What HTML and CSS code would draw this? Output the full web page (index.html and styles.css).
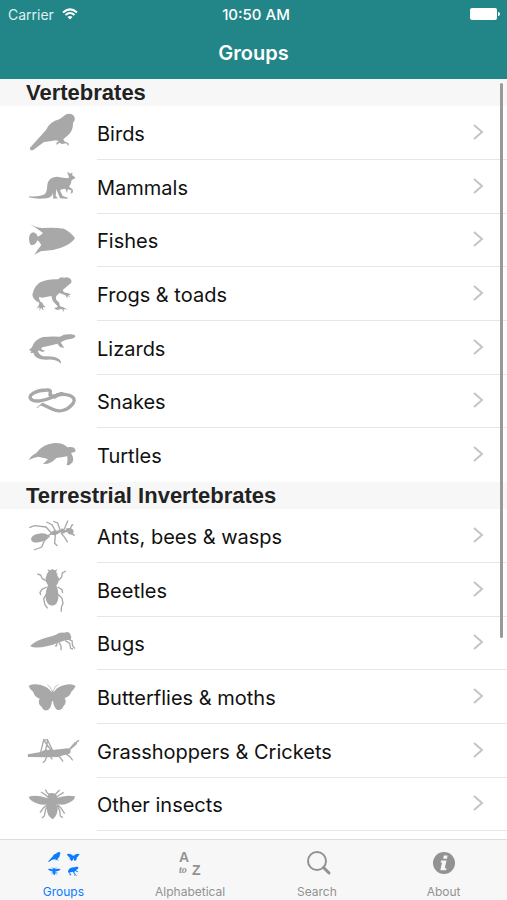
FILE: index.html
```html
<!DOCTYPE html>
<html lang="en">
<head>
<meta charset="utf-8">
<meta name="viewport" content="width=device-width, initial-scale=1">
<title>Groups</title>
<link rel="stylesheet" href="styles.css">
</head>
<body>
<svg class="defs" aria-hidden="true">
  <symbol id="bird" viewBox="18 3 162 156"><path d="M30 128Q52 104 78 75Q89 50 118 43Q131 34 136 29Q148 23 158 29Q166 35 164 46L159 54Q160 76 144 91L130 103L133 109L146 115L145 124L139 115L126 117L118 113L110 120L109 114L116 108L108 106Q88 110 72 111L40 135Q29 139 30 128Z"/></symbol>
  <symbol id="kangaroo" viewBox="18 165 162 156"><path d="M27 274Q62 276 75 267Q81 260 82 240Q85 216 110 215Q132 218 145 220Q149 216 145 210L141 202Q149 203 152 207Q153 201 158 204L156 210Q166 215 166 220L155 225Q154 237 147 245L158 253L159 262L152 267L154 256L143 253L141 265L136 251Q124 251 120 256L128 273L144 278L142 281L120 280L114 265L109 252L107 273L114 280L100 281L99 265Q94 278 80 280Q48 283 27 277Z"/></symbol>
  <symbol id="fish" viewBox="18 -3 162 156"><path d="M31 28Q46 38 65 39Q104 36 132 41Q156 54 165 70Q153 88 123 98Q94 109 64 108L43 119Q51 106 64 90Q57 78 52 76Q47 92 33 90Q27 85 27 69Q29 53 41 52Q50 55 54 65Q62 61 69 54Q54 43 31 28Z"/></symbol>
  <symbol id="frog" viewBox="18 156 162 156"><path d="M37 239Q43 212 61 202Q84 191 115 193Q121 184 132 188Q148 184 154 195L154 203L129 224Q128 232 139 233L154 238L145 241L153 248L142 242L143 251L136 241L118 234L109 243Q104 255 117 262L120 274L130 277L144 284L131 282L132 291L125 282L111 285L102 280L114 275L98 257L94 243L66 248L58 245Q55 257 67 263L70 270L78 277L69 276L71 287L63 278L59 287L58 276L49 281L57 270L58 263Q39 255 37 239Z"/></symbol>
  <symbol id="lizard" viewBox="18 -3 162 156"><path d="M27 84L36 76Q43 53 68 45Q98 42 120 44Q133 35 152 37Q167 37 166 45Q158 52 138 53L122 61L129 72L133 77L121 76L112 65Q94 70 67 76L63 81L75 87L68 90L54 85Q53 96 69 103Q102 101 113 109Q124 115 123 125Q108 110 78 113Q44 112 40 92L31 94L34 88Z"/></symbol>
  <symbol id="snake" viewBox="18 159 162 156"><path class="line" d="M93 226Q88 219 91 212Q94 203 79 204C50 205 26 216 31 229C40 244 76 235 99 225Q111 217 128 214"/><path class="line" d="M101 227Q116 213 139 218C162 222 169 233 156 248C143 264 119 272 98 262Q81 254 65 246"/><path d="M89 205Q91 221 108 216Q122 209 131 212L124 219Q104 219 96 230Q85 227 86 212ZM49 258L65 244L75 248L68 250Q59 250 52 259Z"/></symbol>
  <symbol id="turtle" viewBox="18 -6 162 156"><path d="M26 90Q33 77 49 69Q68 42 104 39Q128 38 143 52Q154 49 162 53Q168 57 166 65L153 69Q163 85 158 97Q151 106 140 106Q144 94 142 79Q122 82 109 84Q91 104 69 102Q78 93 84 87L55 80Q41 83 26 90Z"/></symbol>
  <symbol id="ant" viewBox="18 237 162 156"><path d="M33 329Q34 315 52 312Q73 307 84 315L93 308Q98 299 109 302L119 301L127 295L137 301L139 295L151 294L160 299Q163 306 158 314L147 313L140 305L129 311L122 307L106 316L94 314L84 319Q80 333 56 337Q38 340 33 329Z"/><path class="limb" d="M94 309L78 291L43 287L28 293M107 304L96 284L79 276M121 303L113 279L100 274M89 318L73 332L65 351L42 360M106 314L104 340L112 348M123 309L134 322L143 337M133 298L139 282L144 272M151 296L155 286L160 284M154 310L164 317"/></symbol>
  <symbol id="beetle" viewBox="18 9 162 156"><path d="M81 41L86 34L82 28L91 31L97 27L104 31L112 28L108 36L112 41L112 47L117 55Q117 69 109 76Q116 91 115 115Q112 136 97 137Q80 136 77 115Q76 92 84 76Q76 66 77 54Z"/><path class="limb" d="M78 62L67 56L62 45L52 42M116 61L125 51L127 39L138 33M80 81L66 88L60 97L62 105M113 81L126 89L128 99M79 103L71 116L75 135L83 145M114 103L126 115L129 130L124 142L124 155"/></symbol>
  <symbol id="bug" viewBox="18 171 162 156"><path d="M30 258Q49 240 78 233Q96 229 108 224Q119 215 133 218Q146 213 150 221L154 231L152 239L141 240L127 244L113 249Q72 265 39 262Z"/><path class="limb" d="M145 238L156 242L158 258L165 266M136 242L149 250L152 265L159 267M117 247L123 258L123 271M111 249L110 257L105 258"/></symbol>
  <symbol id="butterfly" viewBox="18 0 162 156"><path d="M26 47Q40 40 60 44Q84 50 94 66L97 61L101 66Q112 49 134 45Q156 40 167 48Q163 58 154 65Q150 79 134 84Q142 99 131 107Q124 124 111 119Q101 112 99 93L96 94Q94 113 84 120Q71 125 65 110Q51 101 59 86Q43 81 40 66Q29 58 26 47Z"/><path class="hair" d="M96 64Q93 50 82 44M99 64Q103 49 115 43"/></symbol>
  <symbol id="grasshopper" viewBox="18 162 162 156"><path d="M23 253L62 246L75 239L97 240L131 236Q145 232 152 239L151 249Q144 255 132 255L114 261L78 262L24 261Z"/><path class="limb" d="M61 251L71 210L97 246M75 249L83 211L100 246M72 210L83 209M148 238L165 218L177 211M150 238L168 222L172 212M80 260L75 272L69 278M115 257L124 267L129 275M139 252L150 260L158 271M91 260L97 268"/></symbol>
  <symbol id="bee" viewBox="18 324 162 156"><path d="M26 380Q44 375 62 379L84 385L83 376L89 370Q97 367 105 371L111 377L109 385Q134 374 165 379Q165 391 145 399Q128 408 111 401L108 405L113 413Q114 435 98 448Q81 439 80 415L85 402Q69 406 56 402Q29 393 26 380Z"/><path class="limb" d="M91 375L82 369L76 359M104 375L112 367L119 360M86 383L76 374L63 366M108 384L118 375L131 367M86 400L70 414L60 428M85 403L77 418L73 438L66 444M108 400L122 413L134 431M110 405L119 421L121 438L128 443"/></symbol>
  <symbol id="chevron" viewBox="0 0 12 18"><path d="M2 2L10 9L2 16"/></symbol>
</svg>

<div class="app">
  <header class="top">
    <div class="status">
      <span class="carrier">Carrier
        <svg class="wifi" viewBox="0 0 16 12" aria-hidden="true"><path d="M1 4.4Q8 -1.6 15 4.4M3.5 7Q8 3 12.500 7"/><path class="dot" d="M5.500 9Q8 7 10.500 9L8 11.500Z"/></svg>
      </span>
      <span class="time">10:50 AM</span>
      <svg class="battery" viewBox="0 0 30 12" aria-hidden="true"><rect width="27" height="12" rx="2"/><path d="M28 4Q30 4 30 6Q30 8 28 8Z"/></svg>
    </div>
    <h1 class="title">Groups</h1>
  </header>

  <main class="content">
    <section>
      <h2 class="heading">Vertebrates</h2>
      <ul class="list">
        <li class="row"><a class="link" href="#"><svg class="animal" aria-hidden="true"><use href="#bird"/></svg><span class="label">Birds<svg class="chevron" aria-hidden="true"><use href="#chevron"/></svg></span></a></li>
        <li class="row"><a class="link" href="#"><svg class="animal" aria-hidden="true"><use href="#kangaroo"/></svg><span class="label">Mammals<svg class="chevron" aria-hidden="true"><use href="#chevron"/></svg></span></a></li>
        <li class="row"><a class="link" href="#"><svg class="animal" aria-hidden="true"><use href="#fish"/></svg><span class="label">Fishes<svg class="chevron" aria-hidden="true"><use href="#chevron"/></svg></span></a></li>
        <li class="row"><a class="link" href="#"><svg class="animal" aria-hidden="true"><use href="#frog"/></svg><span class="label">Frogs &amp; toads<svg class="chevron" aria-hidden="true"><use href="#chevron"/></svg></span></a></li>
        <li class="row"><a class="link" href="#"><svg class="animal" aria-hidden="true"><use href="#lizard"/></svg><span class="label">Lizards<svg class="chevron" aria-hidden="true"><use href="#chevron"/></svg></span></a></li>
        <li class="row"><a class="link" href="#"><svg class="animal" aria-hidden="true"><use href="#snake"/></svg><span class="label">Snakes<svg class="chevron" aria-hidden="true"><use href="#chevron"/></svg></span></a></li>
        <li class="row"><a class="link" href="#"><svg class="animal" aria-hidden="true"><use href="#turtle"/></svg><span class="label">Turtles<svg class="chevron" aria-hidden="true"><use href="#chevron"/></svg></span></a></li>
      </ul>
    </section>
    <section>
      <h2 class="heading">Terrestrial Invertebrates</h2>
      <ul class="list">
        <li class="row"><a class="link" href="#"><svg class="animal" aria-hidden="true"><use href="#ant"/></svg><span class="label">Ants, bees &amp; wasps<svg class="chevron" aria-hidden="true"><use href="#chevron"/></svg></span></a></li>
        <li class="row"><a class="link" href="#"><svg class="animal" aria-hidden="true"><use href="#beetle"/></svg><span class="label">Beetles<svg class="chevron" aria-hidden="true"><use href="#chevron"/></svg></span></a></li>
        <li class="row"><a class="link" href="#"><svg class="animal" aria-hidden="true"><use href="#bug"/></svg><span class="label">Bugs<svg class="chevron" aria-hidden="true"><use href="#chevron"/></svg></span></a></li>
        <li class="row"><a class="link" href="#"><svg class="animal" aria-hidden="true"><use href="#butterfly"/></svg><span class="label">Butterflies &amp; moths<svg class="chevron" aria-hidden="true"><use href="#chevron"/></svg></span></a></li>
        <li class="row"><a class="link" href="#"><svg class="animal" aria-hidden="true"><use href="#grasshopper"/></svg><span class="label">Grasshoppers &amp; Crickets<svg class="chevron" aria-hidden="true"><use href="#chevron"/></svg></span></a></li>
        <li class="row"><a class="link" href="#"><svg class="animal" aria-hidden="true"><use href="#bee"/></svg><span class="label">Other insects<svg class="chevron" aria-hidden="true"><use href="#chevron"/></svg></span></a></li>
      </ul>
    </section>
    <div class="scrollbar" aria-hidden="true"></div>
  </main>

  <nav class="tabs">
    <a class="tab active" href="#" aria-current="page">
      <span class="glyph quad" aria-hidden="true">
        <svg class="mini"><use href="#bird"/></svg><svg class="mini"><use href="#butterfly"/></svg>
        <svg class="mini"><use href="#bee"/></svg><svg class="mini"><use href="#frog"/></svg>
      </span>
      Groups
    </a>
    <a class="tab" href="#">
      <svg class="glyph" viewBox="0 0 32 28" aria-hidden="true"><text class="az" x="5" y="12">A</text><text class="to" x="5" y="23">to</text><text class="az" x="18" y="25">Z</text></svg>
      Alphabetical
    </a>
    <a class="tab" href="#">
      <svg class="glyph" viewBox="0 0 32 28" aria-hidden="true"><circle class="ring" cx="16" cy="11" r="9"/><path class="handle" d="M22.500 17.500L28 23"/></svg>
      Search
    </a>
    <a class="tab" href="#">
      <svg class="glyph" viewBox="0 0 32 28" aria-hidden="true"><circle cx="16" cy="13" r="11"/><path class="info" d="M15.800 5.500H19.500L19 8.800H15.200ZM13 10.500H18.500L16.800 18.200H18.500L18 20.200H12.300L14 12.500H12.600Z"/></svg>
      About
    </a>
  </nav>
</div>
</body>
</html>
```
FILE: styles.css
```css
* { box-sizing: border-box; }

body {
  margin: 0;
  background: #fff;
  color: #111;
  font-family: Inter, "Liberation Sans", sans-serif;
}

a { color: inherit; text-decoration: none; }

.defs { display: none; }

.app {
  display: flex;
  flex-direction: column;
  height: 100vh;
}

.top {
  flex: none;
  background: #228588;
  color: #fff;
}

.status {
  display: grid;
  grid-template-columns: 1fr auto 1fr;
  align-items: center;
  height: 28px;
  padding: 0 7px 0 8px;
  font-size: 14px;
}

.carrier { display: flex; align-items: center; gap: 8px; color: #dff0f0; }
.time { padding-left: 4px; font-size: 15px; font-weight: 500; }

.wifi { width: 16px; height: 12px; fill: none; stroke: #fff; stroke-width: 2; }
.wifi .dot { fill: #fff; stroke: none; }
.battery { justify-self: end; width: 30px; height: 12px; fill: #fff; }

.title {
  margin: 0;
  padding: 12px 0 13px;
  font-size: 20px;
  line-height: 26px;
  font-weight: 600;
  text-align: center;
}

.content {
  position: relative;
  flex: 1;
  min-height: 0;
  overflow: hidden;
}

.heading {
  margin: 0;
  padding: 1px 0 0 26px;
  background: #f7f7f7;
  color: #222;
  font: bold 22px/26px "Liberation Sans", Arial, sans-serif;
}

.list { margin: 0; padding: 0; list-style: none; }

.row { height: 54px; }
.row:nth-child(3n) { height: 53px; }

.link {
  display: flex;
  height: 100%;
  padding-left: 26px;
  font-size: 20px;
}

.animal {
  flex: none;
  width: 54px;
  height: 52px;
  margin-right: 17px;
  color: #a8a8a8;
  fill: currentColor;
}

.line { fill: none; stroke: currentColor; stroke-width: 10; }
.limb { fill: none; stroke: currentColor; stroke-width: 4; }
.hair { fill: none; stroke: currentColor; stroke-width: 2; }

.label {
  display: flex;
  flex: 1;
  align-items: center;
  justify-content: space-between;
  padding: 2px 23px 0 0;
  border-bottom: 1px solid #e6e6e6;
}

.row:last-child .label { border-color: transparent; }
section:last-of-type .row:last-child .label { border-color: #e6e6e6; }

.chevron {
  width: 12px;
  height: 18px;
  margin-bottom: 4px;
  fill: none;
  stroke: #c4c4c8;
  stroke-width: 2;
}

.scrollbar {
  position: absolute;
  top: 4px;
  right: 4px;
  width: 3px;
  height: 73%;
  border-radius: 2px;
  background: #999;
}

.tabs {
  display: grid;
  flex: none;
  grid-template-columns: repeat(4, 1fr);
  height: 61px;
  border-top: 1px solid #ddd;
  background: #f7f7f7;
}

.tab {
  display: flex;
  flex-direction: column;
  align-items: center;
  padding-top: 10px;
  color: #929292;
  font-size: 12px;
  line-height: 16px;
}

.active { color: #0a7aff; }

.glyph { width: 32px; height: 28px; margin-bottom: 6px; fill: currentColor; }
.quad { display: grid; grid-template-columns: 1fr 1fr; gap: 0 4px; }
.mini { width: 15px; height: 14px; color: currentColor; }

.az { font: bold 14px "Liberation Sans", Arial, sans-serif; }
.to { font: italic bold 10px "Liberation Serif", serif; }
.ring { fill: none; stroke: currentColor; stroke-width: 2; }
.handle { stroke: currentColor; stroke-width: 3; stroke-linecap: round; }
.info { fill: #f7f7f7; }
```
